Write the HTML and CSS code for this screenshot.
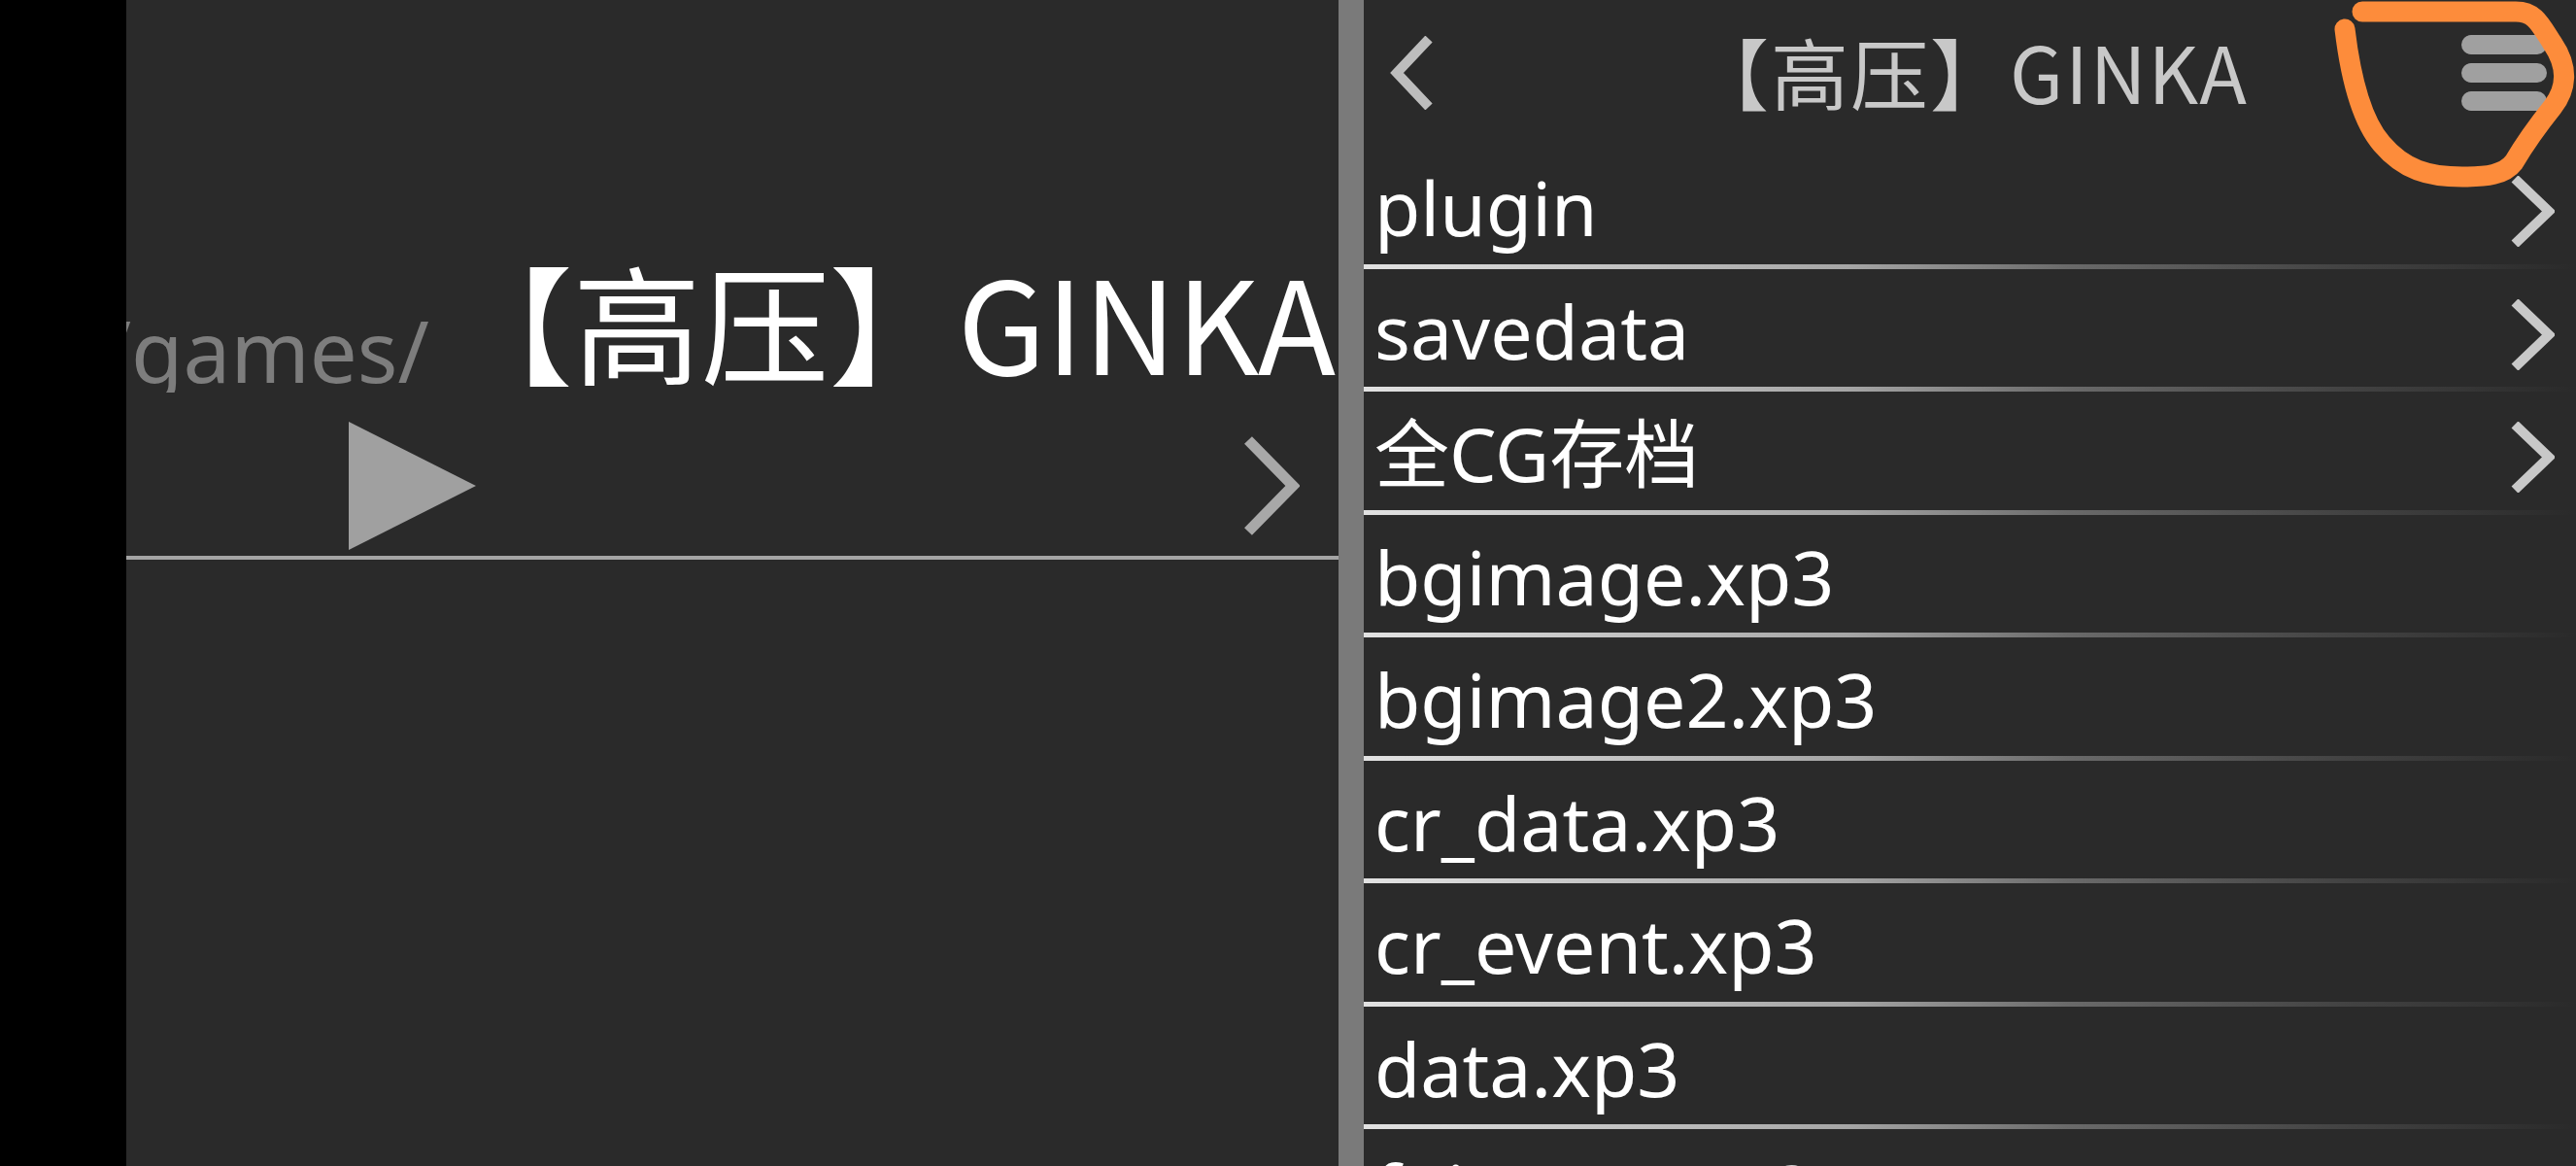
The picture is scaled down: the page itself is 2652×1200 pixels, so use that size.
FILE: index.html
```html
<!DOCTYPE html>
<html lang="zh">
<head>
<meta charset="utf-8">
<title>GINKA</title>
<link rel="stylesheet" href="styles.css">
</head>
<body>
<div class="screen">
  <div class="edge"></div>

  <section class="left">
    <div class="crumb">
      <span class="crumb-line"><span class="crumb-path">/storage/emulated/0/games/</span>【高压】GINKA</span>
    </div>
    <div class="play-row">
      <svg class="play" width="131" height="132" viewBox="0 0 131 132"><polygon points="0,0 131,66 0,132" fill="#a0a0a0"/></svg>
      <svg class="chev-big" width="59" height="102" viewBox="0 0 59 102"><polyline points="6,4 52,51 6,98" fill="none" stroke="#a8a8a8" stroke-width="11"/></svg>
    </div>
  </section>

  <div class="divider"></div>

  <section class="right">
    <header class="head">
      <div class="back">
        <svg width="45" height="76" viewBox="0 0 45 76"><polyline points="41,3 8,38 41,73" fill="none" stroke="#bdbdbd" stroke-width="10"/></svg>
      </div>
      <div class="title">【高压】GINKA</div>
      <div class="menu"><span></span><span></span><span></span></div>
    </header>
    <div class="list">
      <div class="row"><span>plugin</span><svg class="chev" width="46" height="73" viewBox="0 0 46 73"><polyline points="5,3 40,36.5 5,70" fill="none" stroke="#c8c8c8" stroke-width="10"/></svg></div>
      <div class="row"><span>savedata</span><svg class="chev" width="46" height="73" viewBox="0 0 46 73"><polyline points="5,3 40,36.5 5,70" fill="none" stroke="#c8c8c8" stroke-width="10"/></svg></div>
      <div class="row"><span>全CG存档</span><svg class="chev" width="46" height="73" viewBox="0 0 46 73"><polyline points="5,3 40,36.5 5,70" fill="none" stroke="#c8c8c8" stroke-width="10"/></svg></div>
      <div class="row"><span>bgimage.xp3</span></div>
      <div class="row"><span>bgimage2.xp3</span></div>
      <div class="row"><span>cr_data.xp3</span></div>
      <div class="row"><span>cr_event.xp3</span></div>
      <div class="row"><span>data.xp3</span></div>
      <div class="row"><span>fgimage.xp3</span></div>
    </div>
  </section>

  <svg class="annot" width="262" height="200" viewBox="0 0 262 200">
    <path d="M24 30 C30 80, 42 125, 62 148 C85 175, 110 182, 145 182 C170 182, 188 180, 198 167 C208 150, 222 130, 238 110 C252 92, 255 70, 238 45 C225 25, 220 12, 200 12 L42 12" fill="none" stroke="#fd8c3b" stroke-width="21" stroke-linecap="round" stroke-linejoin="round"/>
  </svg>
</div>
</body>
</html>
```

FILE: styles.css
```css
html, body {
  margin: 0;
  padding: 0;
  background: #000;
}

.screen {
  position: relative;
  display: grid;
  grid-template-columns: 130px 1248px 26px 1248px;
  width: 2652px;
  height: 1200px;
  overflow: hidden;
}

.edge {
  background: #000;
}

.left {
  background: #2a2a2a;
  padding-top: 263px;
  display: flex;
  flex-direction: column;
  min-width: 0;
  overflow: hidden;
}

.crumb {
  display: flex;
  justify-content: flex-end;
  overflow: hidden;
  padding-right: 3px;
}

.crumb-line {
  flex-shrink: 0;
  white-space: nowrap;
  font-family: "Noto Sans CJK SC", sans-serif;
  font-size: 132px;
  line-height: 1;
  color: #ffffff;
}

.crumb-path {
  font-family: "Noto Sans", "Open Sans", sans-serif;
  font-size: 87px;
  color: #7d7d7d;
  vertical-align: -8px;
  margin-right: 16px;
}

.play-row {
  box-sizing: border-box;
  height: 172px;
  padding: 24px 40px 0 229px;
  display: flex;
  align-items: center;
  justify-content: space-between;
  border-bottom: 4px solid #a5a5a5;
}

.play, .chev-big, .chev {
  display: block;
  flex-shrink: 0;
}

.divider {
  background: #7a7a7a;
}

.right {
  background: #2a2a2a;
  display: flex;
  flex-direction: column;
  min-width: 0;
  overflow: hidden;
}

.head {
  height: 150px;
  flex-shrink: 0;
  display: grid;
  grid-template-columns: 1fr auto 1fr;
  align-items: center;
}

.back {
  padding-left: 26px;
  display: flex;
}

.title {
  font-family: "Noto Sans CJK SC", sans-serif;
  font-size: 80px;
  line-height: 1;
  letter-spacing: 2px;
  color: #c8c8c8;
  white-space: nowrap;
  margin-bottom: 6px;
}

.menu {
  justify-self: end;
  padding-right: 30px;
  display: flex;
  flex-direction: column;
  gap: 9px;
}

.menu span {
  display: block;
  width: 88px;
  height: 20px;
  border-radius: 10px;
  background: #a0a0a0;
}

.list {
  display: flex;
  flex-direction: column;
}

.row {
  flex-shrink: 0;
  box-sizing: border-box;
  height: 126.5px;
  padding: 7px 22px 5px 11px;
  display: flex;
  align-items: center;
  justify-content: space-between;
  font-family: "Noto Sans", "Open Sans", "Noto Sans CJK SC", sans-serif;
  font-size: 77px;
  line-height: 110px;
  color: #ffffff;
  white-space: nowrap;
  background-image: linear-gradient(to right, #e2e2e2 0%, #a5a5a5 40%, #6a6a6a 58%, #444444 80%, #2a2a2a 100%);
  background-repeat: no-repeat;
  background-size: 100% 5px;
  background-position: left bottom;
}

.chev {
  margin-top: 6.5px;
}

.annot {
  position: absolute;
  left: 2390px;
  top: 0;
  pointer-events: none;
}
```
